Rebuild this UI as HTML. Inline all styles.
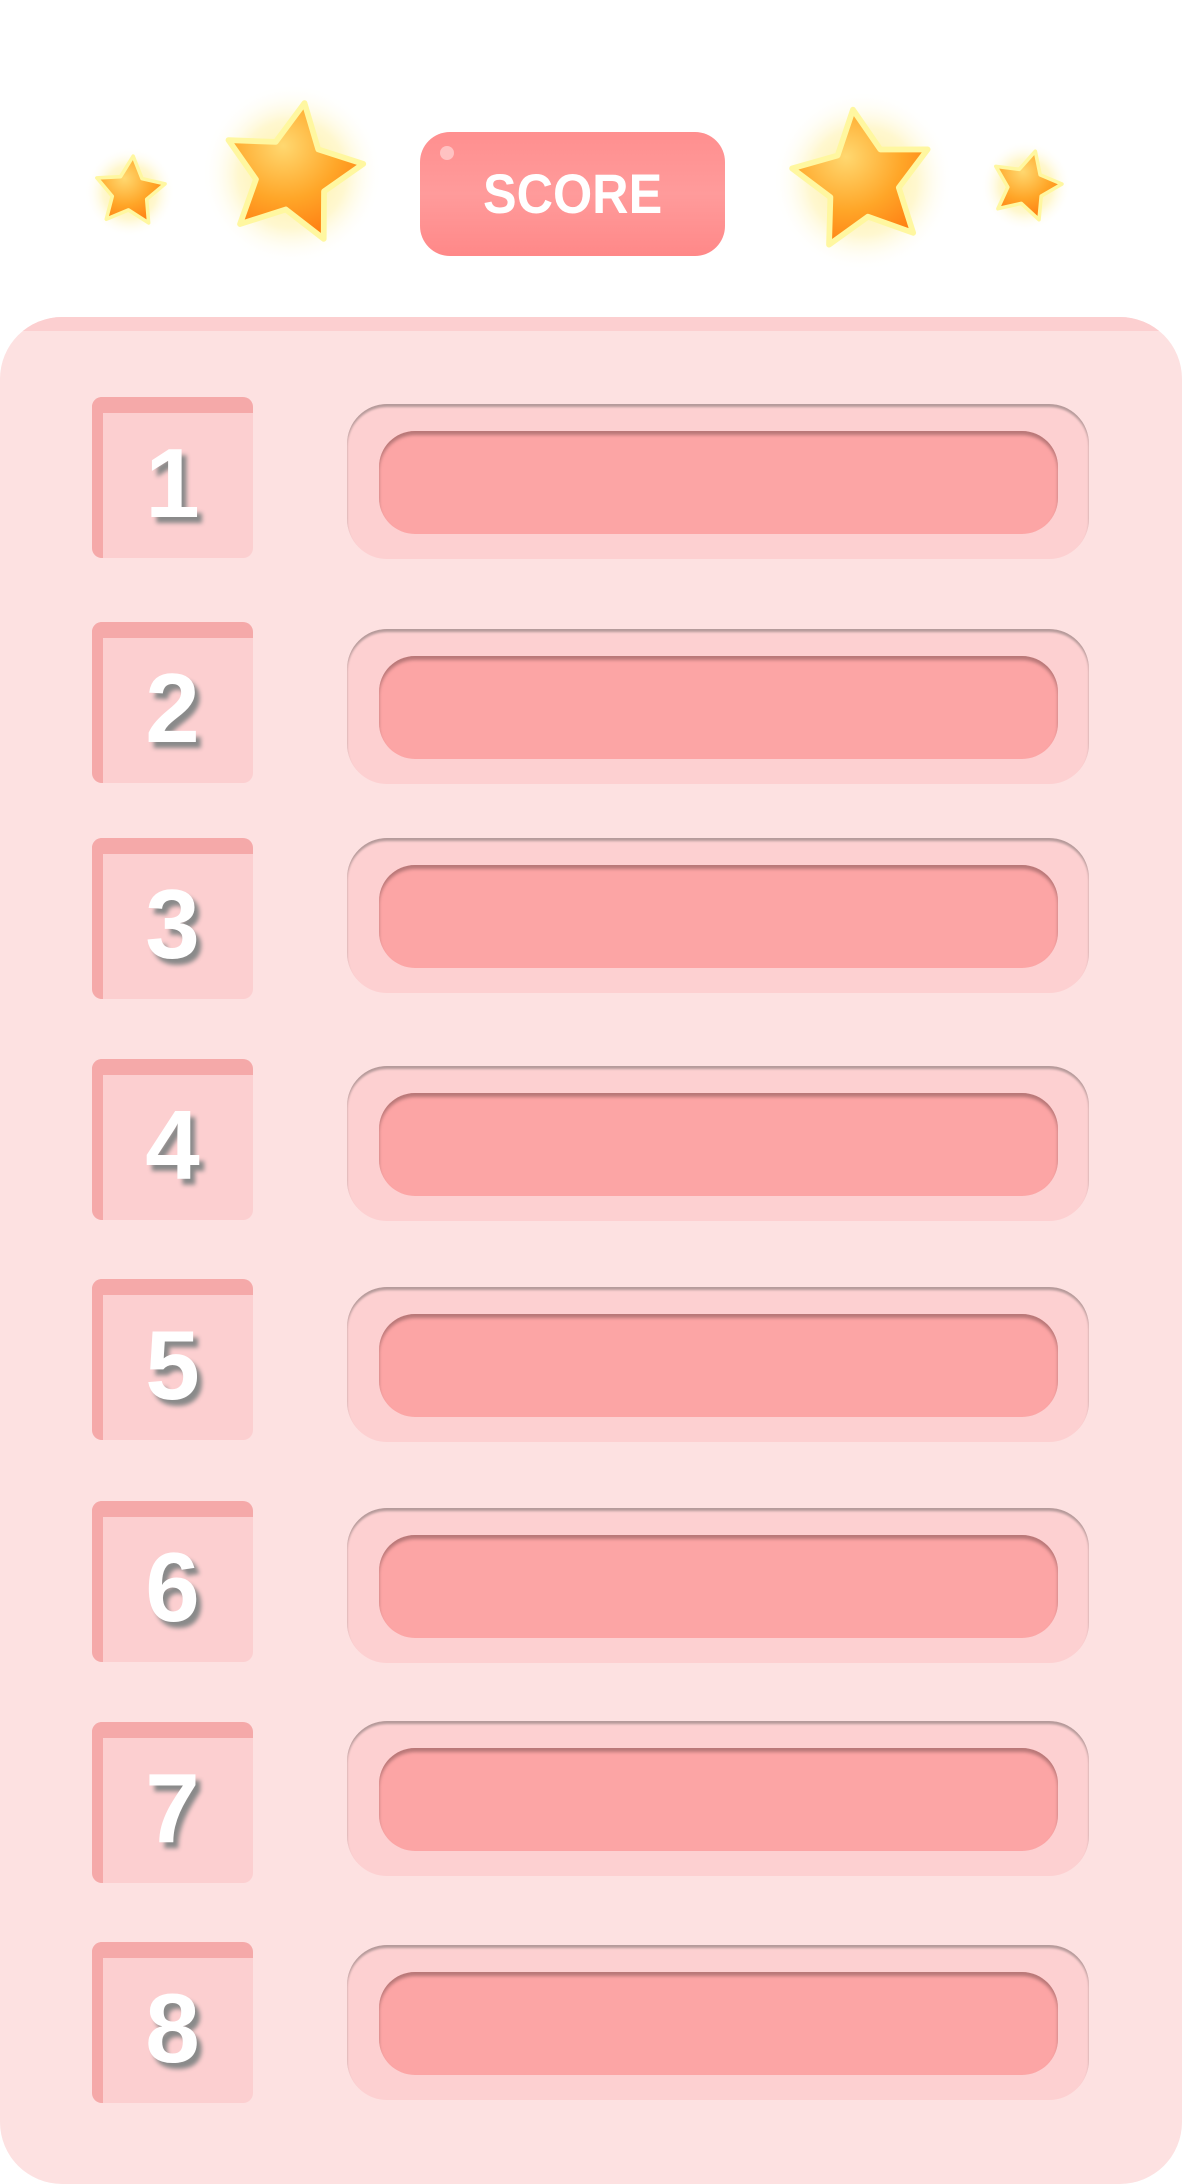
<!DOCTYPE html>
<html><head><meta charset="utf-8"><style>
*{margin:0;padding:0;box-sizing:border-box}
body{width:1182px;height:2184px;background:#fff;position:relative;overflow:hidden;font-family:"Liberation Sans",sans-serif}
.panel{position:absolute;left:0;top:317px;width:1182px;height:1867px;background:#fde1e1;border-radius:62px;overflow:hidden}
.panel:before{content:"";position:absolute;left:0;top:0;right:0;height:14px;background:#fccfd0}
.score{position:absolute;left:420px;top:132px;width:305px;height:124px;border-radius:30px;background:linear-gradient(#ff8f8f,#ff9b9b 50%,#ff8888);color:#fff;font-weight:bold;font-size:56px;text-align:center;line-height:124px}
.score b{display:inline-block;transform:scaleX(.9)}
.score:after{content:"";position:absolute;left:20px;top:14px;width:14px;height:14px;border-radius:50%;background:#ffc2c2}
.box{position:absolute;left:92px;width:161px;height:161px;border-radius:10px;background:#fccfd0;overflow:hidden}
.box:before{content:"";position:absolute;left:0;top:0;right:0;height:16px;background:#f5a9a9}
.box:after{content:"";position:absolute;left:0;top:0;bottom:0;width:11px;background:#f5a9a9}
.box span{position:absolute;left:0;right:0;top:0;bottom:0;text-align:center;line-height:172px;font-size:98px;font-weight:bold;color:#fff;text-shadow:5px 6px 4px #8a8a8a;z-index:1}
.outer{position:absolute;left:347px;width:742px;height:155px;border-radius:40px;background:#fdd0d1;box-shadow:inset 0 3px 2px #b59a9a}
.inner{position:absolute;left:32px;top:27px;width:679px;height:103px;border-radius:36px;background:#fca5a5;box-shadow:inset 0 4px 3px #b87878}
svg{position:absolute}
</style></head><body>
<svg width="1182" height="320" style="left:0;top:0">
<defs>
<radialGradient id="g" cx="40%" cy="35%" r="75%"><stop offset="0" stop-color="#ffd870"/><stop offset=".55" stop-color="#ffa628"/><stop offset="1" stop-color="#ff7a10"/></radialGradient>
<radialGradient id="glow"><stop offset="0" stop-color="#ffe870" stop-opacity=".8"/><stop offset=".6" stop-color="#fff0a0" stop-opacity=".5"/><stop offset="1" stop-color="#fff" stop-opacity="0"/></radialGradient>
<path id="p" d="M0,-1 L0.3,-0.4 0.95,-0.31 0.48,0.16 0.59,0.81 0,0.5 -0.59,0.81 -0.48,0.16 -0.95,-0.31 -0.3,-0.4Z"/>
</defs>
<circle cx="292" cy="174" r="90" fill="url(#glow)"/>
<circle cx="863" cy="181" r="90" fill="url(#glow)"/>
<circle cx="130" cy="192" r="45" fill="url(#glow)"/>
<circle cx="1026" cy="186" r="45" fill="url(#glow)"/>
<g transform="translate(292,174) scale(72) rotate(10)"><use href="#p" fill="url(#g)" stroke="#fff7a0" stroke-width=".08" stroke-linejoin="round"/></g>
<g transform="translate(863,181) scale(72) rotate(-8)"><use href="#p" fill="url(#g)" stroke="#fff7a0" stroke-width=".08" stroke-linejoin="round"/></g>
<g transform="translate(130,192) scale(36) rotate(5)"><use href="#p" fill="url(#g)" stroke="#fff7a0" stroke-width=".1" stroke-linejoin="round"/></g>
<g transform="translate(1026,186) scale(36) rotate(15)"><use href="#p" fill="url(#g)" stroke="#fff7a0" stroke-width=".1" stroke-linejoin="round"/></g>
</svg>
<div class="score"><b>SCORE</b></div>
<div class="panel"></div>
<div class="box" style="top:397px"><span>1</span></div><div class="outer" style="top:404px"><div class="inner"></div></div>
<div class="box" style="top:622px"><span>2</span></div><div class="outer" style="top:629px"><div class="inner"></div></div>
<div class="box" style="top:838px"><span>3</span></div><div class="outer" style="top:838px"><div class="inner"></div></div>
<div class="box" style="top:1059px"><span>4</span></div><div class="outer" style="top:1066px"><div class="inner"></div></div>
<div class="box" style="top:1279px"><span>5</span></div><div class="outer" style="top:1287px"><div class="inner"></div></div>
<div class="box" style="top:1501px"><span>6</span></div><div class="outer" style="top:1508px"><div class="inner"></div></div>
<div class="box" style="top:1722px"><span>7</span></div><div class="outer" style="top:1721px"><div class="inner"></div></div>
<div class="box" style="top:1942px"><span>8</span></div><div class="outer" style="top:1945px"><div class="inner"></div></div>
</body></html>
